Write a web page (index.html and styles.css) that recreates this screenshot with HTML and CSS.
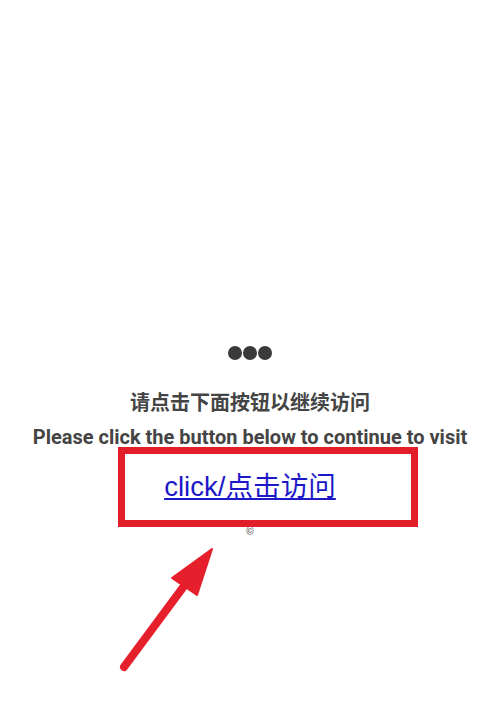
FILE: index.html
```html
<!DOCTYPE html>
<html lang="zh">
<head>
<meta charset="utf-8">
<link rel="stylesheet" href="styles.css">
</head>
<body>
<main class="page">
  <div class="dots"><span></span><span></span><span></span></div>
  <p class="title-zh">请点击下面按钮以继续访问</p>
  <p class="title-en">Please click the button below to continue to visit</p>
  <div class="link-wrap"><a class="visit" href="#">click/点击访问</a></div>
  <div class="mark">©</div>
</main>
<div class="annot-box"></div>
<svg class="annot-arrow" width="500" height="712" viewBox="0 0 500 712">
  <line x1="124" y1="667" x2="190" y2="578" stroke="#e51f2b" stroke-width="8" stroke-linecap="round"/>
  <polygon points="212,549 172,578 197,595" fill="#e51f2b" stroke="#e51f2b" stroke-width="2" stroke-linejoin="round"/>
</svg>
</body>
</html>
```
FILE: styles.css
```css
html, body {
  margin: 0;
  padding: 0;
  background: #fff;
}
body {
  width: 500px;
  height: 712px;
  position: relative;
  overflow: hidden;
  font-family: Roboto, "Noto Sans CJK SC", sans-serif;
}
.page {
  display: flex;
  flex-direction: column;
  align-items: center;
  padding-top: 346px;
}
.dots {
  display: flex;
  gap: 1px;
}
.dots span {
  width: 14px;
  height: 14px;
  border-radius: 50%;
  background: #3a3a3a;
}
.title-zh {
  margin: 31px 0 0;
  font-size: 20px;
  font-weight: 700;
  color: #444;
  line-height: 24px;
}
.title-en {
  margin: 10px 0 0;
  font-size: 20px;
  font-weight: 700;
  color: #444;
  line-height: 24px;
  white-space: nowrap;
}
.link-wrap {
  margin-top: 22px;
}
.visit {
  font-family: "Liberation Sans", "Noto Sans CJK SC", sans-serif;
  font-size: 27.6px;
  color: #1c18c8;
  text-decoration: underline;
  line-height: 32px;
}
.mark {
  margin-top: 23px;
  font-size: 10px;
  color: #555;
  line-height: 12px;
}
.annot-box {
  position: absolute;
  left: 118px;
  top: 447px;
  width: 286px;
  height: 66px;
  border: 7px solid #e31e2b;
}
.annot-arrow {
  position: absolute;
  left: 0;
  top: 0;
}
```
